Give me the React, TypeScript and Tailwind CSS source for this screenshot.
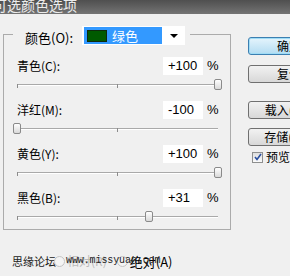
import React from 'react';

type Row = { label: string; value: string; pct: number };

const rows: Row[] = [
  { label: '青色(C):', value: '+100', pct: 1 },
  { label: '洋红(M):', value: '-100', pct: 0 },
  { label: '黄色(Y):', value: '+100', pct: 1 },
  { label: '黑色(B):', value: '+31', pct: 0.655 },
];

const TRACK = 201;

const Slider: React.FC<{ pct: number }> = ({ pct }) => (
  <div className="relative h-[18px] ml-[13px] w-[201px]">
    {/* track */}
    <div className="absolute left-0 right-0 top-[9px] h-px bg-[#a9a9a9]" />
    <div className="absolute left-0 right-0 top-[10px] h-px bg-white" />
    {/* ticks */}
    <div className="absolute left-0 top-[9px] w-px h-[4px] bg-[#8c8c8c]" />
    <div className="absolute left-[100px] top-[9px] w-px h-[4px] bg-[#8c8c8c]" />
    {/* thumb */}
    <div
      className="absolute top-[4px] w-[8px] h-[11px] rounded-[2px] border border-[#8a8a8a] bg-gradient-to-b from-[#ffffff] to-[#d9d9d9]"
      style={{ left: `${Math.round(pct * TRACK) - 4}px` }}
    />
  </div>
);

const Button: React.FC<{ children: React.ReactNode; primary?: boolean; className?: string }> = ({
  children,
  primary,
  className,
}) => (
  <div
    className={`w-[82px] h-[18px] shrink-0 rounded-[3px] flex items-center justify-center text-[12px] leading-none text-black ${
      primary
        ? 'border border-[#3c7fb1] bg-gradient-to-b from-[#e5f4fc] to-[#b3dcf2] shadow-[inset_0_0_0_1px_#9fdcf6]'
        : 'border border-[#707070] bg-gradient-to-b from-[#f2f2f2] to-[#d8d8d8]'
    } ${className ?? ''}`}
  >
    {children}
  </div>
);

export default function App() {
  return (
    <div className="w-[290px] h-[276px] bg-[#f0f0f0] overflow-hidden flex flex-col font-['Noto_Sans_CJK_SC','Noto_Sans',sans-serif] text-black">
      {/* Title bar */}
      <div className="h-[14px] shrink-0 bg-gradient-to-b from-[#4f4f4f] to-[#747474] flex items-start overflow-hidden">
        <span className="-ml-[7px] -mt-[3px] shrink-0 text-[14px] leading-[17px] text-[#ececec]">可选颜色选项</span>
      </div>

      <div className="flex flex-row pl-[3px] pt-[12px]">
        {/* Group box */}
        <fieldset className="w-[228px] shrink-0 border border-[#ababab] pb-[4px] pt-[15px]">
          <legend className="ml-[9px] h-[16px] flex items-start pr-[5px]">
            <span className="pl-[12px] mt-[4px] text-[13px] leading-[16px]">颜色(O):</span>
            <div className="ml-[9px] w-[103px] h-[19px] bg-white flex items-stretch">
              <div className="ml-[2px] my-[1px] w-[78px] bg-[#3399ff] flex items-center">
                <div className="ml-[3px] w-[20px] h-[12px] bg-[#005a00] border border-[#0d2a0d]" />
                <span className="ml-[5px] text-[13px] leading-none text-white">绿色</span>
              </div>
              <div className="flex-1 flex items-center justify-center">
                <svg width="8" height="4" viewBox="0 0 8 4">
                  <path d="M0 0 H8 L4 4 Z" fill="#000" />
                </svg>
              </div>
            </div>
          </legend>

          {rows.map((r) => (
            <div key={r.label} className="mb-[8px] last:mb-0">
              <div className="h-[18px] flex items-center pl-[13px]">
                <span className="w-[146px] text-[12px] leading-none">{r.label}</span>
                <div className="w-[40px] h-[18px] bg-white flex items-center pl-[5px] font-['Liberation_Sans',sans-serif] text-[13px]">
                  {r.value}
                </div>
                <span className="ml-[4px] font-['Liberation_Sans',sans-serif] text-[13px]">%</span>
              </div>
              <Slider pct={r.pct} />
            </div>
          ))}
        </fieldset>

        {/* Right buttons */}
        <div className="ml-[17px] pt-[11px] shrink-0 flex flex-col">
          <Button primary>确定</Button>
          <Button className="mt-[10px]">复位</Button>
          <Button className="mt-[18px]">载入(L)...</Button>
          <Button className="mt-[9px]">存储(S)...</Button>
          <div className="mt-[4px] ml-[4px] flex items-center h-[14px]">
            <div className="w-[11px] h-[11px] border border-[#8e8f8f] bg-gradient-to-b from-[#dedede] to-[#fbfbfb] flex items-center justify-center">
              <svg width="8" height="8" viewBox="0 0 8 8">
                <path d="M1 4 L3 6.5 L7 1" stroke="#2a4fa0" strokeWidth="1.6" fill="none" />
              </svg>
            </div>
            <span className="ml-[3px] text-[12px] leading-none">预览(P)</span>
          </div>
        </div>
      </div>

      {/* Bottom radios with watermark */}
      <div className="mt-[23px] h-[16px] flex items-center pl-[12px]">
        <span className="text-[11px] leading-none text-[#222] shrink-0">思缘论坛</span>
        <div className="relative -ml-[2px] flex items-center h-[16px] shrink-0">
          <div className="w-[11px] h-[11px] rounded-full border border-[#c4c4c4] bg-[#f4f4f4]" />
          <span className="ml-[2px] text-[12px] leading-none text-[#bbbbbb]">相对(R)</span>
          <div className="ml-[10px] w-[11px] h-[11px] rounded-full border border-[#c4c4c4] bg-[#f4f4f4]" />
          <span className="ml-[2px] text-[13px] leading-none">绝对(A)</span>
          <span className="absolute left-[12px] top-[1px] whitespace-nowrap font-['Liberation_Mono',monospace] text-[10px] leading-[14px] tracking-[-0.1px] text-[#222]">
            www.missyuan.com
          </span>
        </div>
      </div>
    </div>
  );
}
